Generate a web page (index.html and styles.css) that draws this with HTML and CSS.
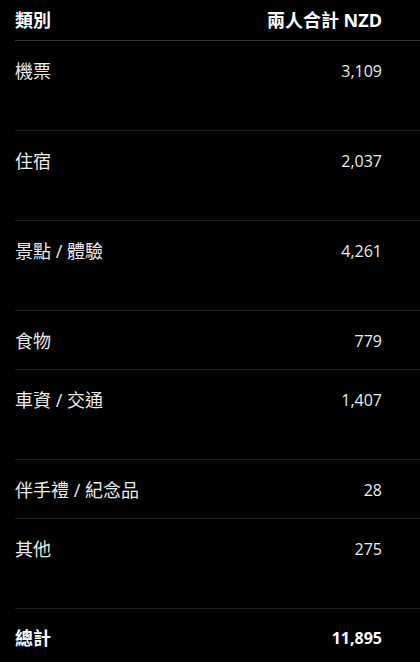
FILE: index.html
```html
<!DOCTYPE html>
<html lang="zh-Hant">
<head>
<meta charset="UTF-8" />
<meta name="viewport" content="width=device-width, initial-scale=1" />
<title>旅費統計</title>
<link rel="stylesheet" href="styles.css">
</head>
<body>

<table class="budget">
  <thead>
    <tr>
      <th class="cat">類別</th>
      <th class="amt">兩人合計 NZD</th>
    </tr>
  </thead>
  <tbody>
    <tr class="tall"><td class="cat">機票</td><td class="amt">3,109</td></tr>
    <tr class="tall"><td class="cat">住宿</td><td class="amt">2,037</td></tr>
    <tr class="tall"><td class="cat">景點 / 體驗</td><td class="amt">4,261</td></tr>
    <tr><td class="cat">食物</td><td class="amt">779</td></tr>
    <tr class="tall"><td class="cat">車資 / 交通</td><td class="amt">1,407</td></tr>
    <tr><td class="cat">伴手禮 / 紀念品</td><td class="amt">28</td></tr>
    <tr class="tall"><td class="cat">其他</td><td class="amt">275</td></tr>
    <tr class="total"><td class="cat">總計</td><td class="amt">11,895</td></tr>
  </tbody>
</table>

</body>
</html>
```

FILE: styles.css
```css
/* Base */
body, html {
  margin: 0; padding: 0;
  background: #000;
  color: #ececec;
  font-family: "Open Sans", "Noto Sans CJK TC", sans-serif;
  font-size: 16px;
  overflow: hidden;
}

/* Table */
.budget {
  margin-left: 15px;
  width: calc(100% - 15px);
  border-collapse: collapse;
}

.budget th {
  font-weight: 700;
  font-size: 18px;
  color: #fff;
  padding: 8px 0;
  line-height: 24px;
  border-bottom: 1px solid #333;
}

.budget td {
  padding: 18px 0 16px;
  line-height: 24px;
  border-bottom: 1px solid #1c1c1c;
}

.cat { text-align: left; }
.budget td.cat { font-size: 18px; }
.amt {
  text-align: right;
  padding-right: 38px !important;
}

/* rows that hold an extra blank line */
.budget tr.tall td { padding-bottom: 47px; }

.budget tr.total td {
  font-weight: 700;
  color: #fff;
  border-bottom: none;
  padding-top: 17px;
}
```
